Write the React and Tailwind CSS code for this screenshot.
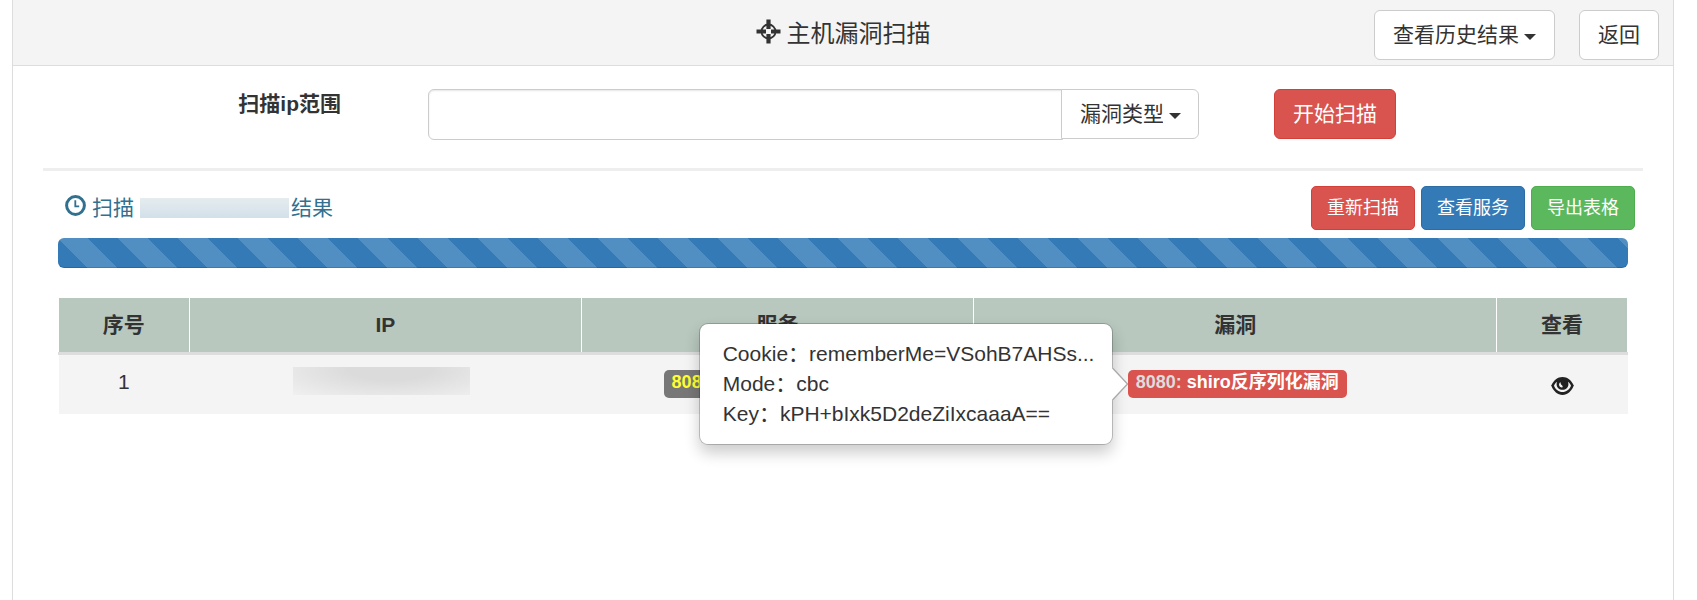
import React from "react";
import clsx from "clsx";

const CONTROL = "h-[50px] rounded-md border text-[21px] leading-[30px]";
const SMALL_BUTTON =
  "h-11 rounded-[5px] border px-[15px] text-lg leading-6 text-white whitespace-nowrap";
const BADGE =
  "relative ml-1 inline-block h-7 rounded-[5px] px-2 text-lg leading-6 font-bold text-left align-top";

function TargetIcon() {
  return (
    <svg width="25" height="25" viewBox="0 0 25 25" fill="none" stroke="currentColor" aria-hidden="true">
      <circle cx="12.5" cy="12.5" r="7" strokeWidth="1.8" />
      <path d="M12.5 0.5V10M12.5 15V24.5M0.5 12.5H10M15 12.5H24.5" strokeWidth="4.2" />
    </svg>
  );
}

function ClockIcon() {
  return (
    <svg width="21" height="21" viewBox="0 0 21 21" fill="none" stroke="currentColor" aria-hidden="true">
      <circle cx="10.5" cy="10.5" r="8.9" strokeWidth="3" />
      <path d="M10.3 5.2V11.4H14.2" strokeWidth="1.8" />
    </svg>
  );
}

function EyeIcon() {
  return (
    <svg width="23" height="18" viewBox="0 0 23 18" aria-hidden="true">
      <path
        d="M11.5 0C6.6 0 2.6 3.2 0.2 8.6C2.6 14.6 6.6 18 11.5 18C16.4 18 20.4 14.6 22.8 8.6C20.4 3.2 16.4 0 11.5 0Z"
        fill="currentColor"
      />
      <path
        d="M6 4.8C4.6 5.8 3.7 7.1 3 8.7C4.7 12.6 7.6 15 11.5 15C15.4 15 18.3 12.6 20 8.7C19.3 7.1 18.4 5.8 17 4.8C17.3 5.6 17.4 6.4 17.4 7.2C17.4 10.4 14.8 12.8 11.5 12.8C8.2 12.8 5.6 10.4 5.6 7.2C5.6 6.4 5.7 5.6 6 4.8Z"
        fill="#f4f4f4"
      />
      <path d="M9.6 5.2C8.2 5.8 7.7 7.4 8.3 8.8C8.8 10 10 10.7 11.2 10.5C12 9.8 11.7 8.9 10.9 8.3C10 7.6 9.5 6.5 9.6 5.2Z" fill="#f4f4f4" />
    </svg>
  );
}

function Dropdown({ label, className }) {
  return (
    <div className={clsx("grid items-center", className)}>
      <select
        aria-label={label}
        className={clsx(
          CONTROL,
          "col-start-1 row-start-1 w-full appearance-none border-[#ccc] bg-white pr-[35px] pl-[18px] text-[#333]",
          className
        )}
      >
        <option>{label}</option>
      </select>
      <svg
        className="pointer-events-none col-start-1 row-start-1 mt-1 mr-[19px] justify-self-end text-[#333]"
        width="12"
        height="6"
        viewBox="0 0 12 6"
        aria-hidden="true"
      >
        <path d="M0 0H12L6 6Z" fill="currentColor" />
      </svg>
    </div>
  );
}

function Popover({ children }) {
  return (
    <div
      role="tooltip"
      className="absolute top-1/2 right-full z-10 mr-[15px] w-[414px] -translate-y-1/2 rounded-[9px] border border-black/20 bg-white bg-clip-padding px-[23px] py-[15px] text-[21px] leading-[30px] font-normal whitespace-nowrap text-[#333] shadow-[0_8px_15px_rgba(0,0,0,0.2)]"
    >
      {children}
      <svg className="absolute top-1/2 left-full -translate-y-1/2" width="16" height="34" viewBox="0 0 16 34" aria-hidden="true">
        <path d="M0 0.5L15.5 17L0 33.5Z" fill="#fff" />
        <path d="M0.5 1L15.5 17L0.5 33" fill="none" stroke="#aaa" strokeWidth="1.3" />
      </svg>
    </div>
  );
}

function Header() {
  return (
    <header className="grid h-[66px] grid-cols-[1fr_auto_1fr] items-center border-b border-[#ddd] bg-[#f4f4f4]">
      <h1 className="col-start-2 mt-0.5 flex items-center gap-1.5 text-2xl">
        <span className="mb-1">
          <TargetIcon />
        </span>
        主机漏洞扫描
      </h1>
      <div className="mt-1 flex justify-end gap-6 pr-3.5">
        <Dropdown label="查看历史结果" className="rounded-md" />
        <button type="button" className={clsx(CONTROL, "border-[#ccc] bg-white px-[18px]")}>
          返回
        </button>
      </div>
    </header>
  );
}

function ScanForm() {
  return (
    <form className="grid grid-cols-[385fr_772fr_443fr] items-start" onSubmit={(e) => e.preventDefault()}>
      <label htmlFor="ip-range" className="pr-[87px] text-right text-[21px] leading-[30px] font-bold">
        扫描ip范围
      </label>
      <div className="flex items-start">
        <input
          id="ip-range"
          type="text"
          className="h-[51px] min-w-0 flex-1 rounded-l-md border border-[#ccc] px-[18px] text-[21px] shadow-[inset_0_1px_2px_rgba(0,0,0,0.1)]"
        />
        <Dropdown label="漏洞类型" className="-ml-px rounded-l-none" />
      </div>
      <div className="pl-[74px]">
        <button type="submit" className={clsx(CONTROL, "border-[#d43f3a] bg-[#d9534f] px-[18px] text-white")}>
          开始扫描
        </button>
      </div>
    </form>
  );
}

function ResultBar() {
  return (
    <div className="mt-[15px] flex items-center justify-between pr-2 pl-[22px]">
      <h2 className="flex items-center text-[21px] leading-[30px] text-[#31708f]">
        <span className="mr-1.5 mb-1.5">
          <ClockIcon />
        </span>
        扫描
        <span className="mr-0.5 ml-1.5 h-5 w-[149px] bg-linear-to-b from-[#e5ecee] to-[#d3e0e9]" />
        结果
      </h2>
      <div className="flex gap-1.5">
        <button type="button" className={clsx(SMALL_BUTTON, "border-[#d43f3a] bg-[#d9534f]")}>
          重新扫描
        </button>
        <button type="button" className={clsx(SMALL_BUTTON, "border-[#2e6da4] bg-[#337ab7]")}>
          查看服务
        </button>
        <button type="button" className={clsx(SMALL_BUTTON, "border-[#4cae4c] bg-[#5cb85c]")}>
          导出表格
        </button>
      </div>
    </div>
  );
}

function ResultTable() {
  const head = "border-x border-b-[3px] border-x-white border-b-[#ddd] py-3 font-bold";
  const cell = "h-[60px] pt-3 align-top";
  return (
    <table className="mt-[30px] w-full table-fixed border-collapse text-center text-[21px] leading-[30px]">
      <colgroup>
        <col className="w-1/12" />
        <col className="w-3/12" />
        <col className="w-3/12" />
        <col className="w-4/12" />
        <col className="w-1/12" />
      </colgroup>
      <thead className="bg-[#b8c8be]">
        <tr>
          <th className={head}>序号</th>
          <th className={head}>IP</th>
          <th className={head}>服务</th>
          <th className={head}>漏洞</th>
          <th className={head}>查看</th>
        </tr>
      </thead>
      <tbody>
        <tr className="bg-[#f4f4f4]">
          <td className={cell}>1</td>
          <td className={clsx(cell, "pr-2")}>
            <div className="mx-auto h-7 w-[177px] bg-[radial-gradient(ellipse_at_55%_10%,#dadbda_30%,#f0f0f0_100%)]" />
          </td>
          <td className={cell}>
            <span className={clsx(BADGE, "mt-[3px] min-w-[232px] bg-[#777] text-[#ff3]")}>8080</span>
          </td>
          <td className={cell}>
            <span className={clsx(BADGE, "mt-[3px] bg-[#d9534f] text-white")}>
              <span className="text-[#ddd]">8080: </span>
              shiro反序列化漏洞
              <Popover>
                <p>Cookie：rememberMe=VSohB7AHSs...</p>
                <p>Mode：cbc</p>
                <p>Key：kPH+bIxk5D2deZiIxcaaaA==</p>
              </Popover>
            </span>
          </td>
          <td className={cell}>
            <button type="button" aria-label="查看" className="mt-2.5 inline-block align-top text-[#222]">
              <EyeIcon />
            </button>
          </td>
        </tr>
      </tbody>
    </table>
  );
}

export default function App() {
  return (
    <div className="flex min-h-screen bg-white pr-[23px] pl-3 font-['Liberation_Sans','Noto_Sans_CJK_SC',sans-serif] text-[#333]">
      <div className="min-w-0 flex-1 border-x border-[#ddd]">
        <Header />
        <main className="px-[30px] pt-[23px]">
          <ScanForm />
          <hr className="mt-7 border-t-[3px] border-[#eee]" />
          <ResultBar />
          <div className="mt-2 px-[15px]">
            <div
              role="progressbar"
              aria-label="扫描"
              className="h-[30px] rounded-md bg-[#337ab7] bg-[linear-gradient(45deg,rgba(255,255,255,0.15)_25%,transparent_25%,transparent_50%,rgba(255,255,255,0.15)_50%,rgba(255,255,255,0.15)_75%,transparent_75%,transparent)] bg-size-[60px_60px] shadow-[inset_0_-1px_0_rgba(0,0,0,0.15)]"
            />
            <ResultTable />
          </div>
        </main>
      </div>
    </div>
  );
}
